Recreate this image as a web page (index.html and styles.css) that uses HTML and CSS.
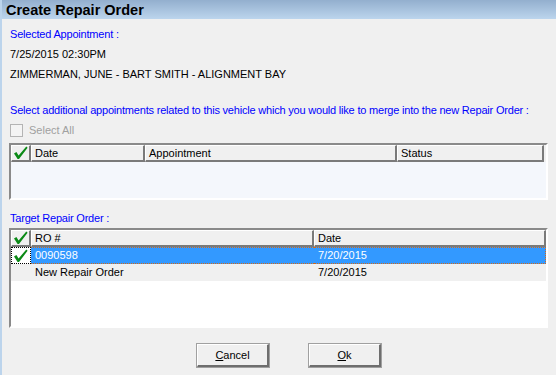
FILE: index.html
```html
<!DOCTYPE html>
<html>
<head>
<meta charset="utf-8">
<link rel="stylesheet" href="styles.css">
</head>
<body>
<div class="dialog">
  <div class="titlebar">Create Repair Order</div>
  <div class="content">
    <div class="line blue">Selected Appointment :</div>
    <div class="line">7/25/2015 02:30PM</div>
    <div class="line">ZIMMERMAN, JUNE - BART SMITH - ALIGNMENT BAY</div>
    <div class="line blue gap-top">Select additional appointments related to this vehicle which you would like to merge into the new Repair Order :</div>
    <div class="line selectall"><span class="checkbox"></span><span class="disabled">Select All</span></div>
    <div class="grid grid1">
      <div class="header">
        <div class="hcell chk"><svg width="16" height="14" viewBox="0 0 16 14"><path d="M1 7.5 L3.4 6 L5.6 9.4 L13.3 0.6 L14.6 1.8 L6 13 L4.6 13 Z" fill="#0b8a16"/></svg></div>
        <div class="hcell c-date">Date</div>
        <div class="hcell c-appt">Appointment</div>
        <div class="hcell c-status">Status</div>
      </div>
      <div class="body1"></div>
    </div>
    <div class="line blue target">Target Repair Order :</div>
    <div class="grid grid2">
      <div class="header">
        <div class="hcell chk"><svg width="16" height="14" viewBox="0 0 16 14"><path d="M1 7.5 L3.4 6 L5.6 9.4 L13.3 0.6 L14.6 1.8 L6 13 L4.6 13 Z" fill="#0b8a16"/></svg></div>
        <div class="hcell c-ro">RO #</div>
        <div class="hcell c-date2">Date</div>
      </div>
      <div class="row selected">
        <div class="cell chk focus"><svg width="16" height="14" viewBox="0 0 16 14"><path d="M1 7.5 L3.4 6 L5.6 9.4 L13.3 0.6 L14.6 1.8 L6 13 L4.6 13 Z" fill="#0b8a16"/></svg></div>
        <div class="cell sel c-ro">0090598</div>
        <div class="cell sel c-date2">7/20/2015</div>
      </div>
      <div class="row alt">
        <div class="cell chk"></div>
        <div class="cell c-ro">New Repair Order</div>
        <div class="cell c-date2">7/20/2015</div>
      </div>
    </div>
    <div class="buttons">
      <div class="btn"><u>C</u>ancel</div>
      <div class="btn"><u>O</u>k</div>
    </div>
  </div>
</div>
</body>
</html>
```
FILE: styles.css
```css
html, body {
  margin: 0;
  padding: 0;
  background: #f0f0f0;
}
.dialog {
  width: 556px;
  height: 375px;
  box-sizing: border-box;
  border-left: 2px solid #bcd4ec;
  background: #f0f0f0;
  font-family: "Liberation Sans", Arial, sans-serif;
  font-size: 11px;
  color: #000;
  overflow: hidden;
}
.titlebar {
  height: 19px;
  margin-left: -2px;
  padding-left: 6px;
  line-height: 20px;
  font-weight: bold;
  font-size: 14.5px;
  color: #000;
  background: linear-gradient(#93afce, #bcd5ed);
}
.content {
  padding: 5px 0 0 8px;
  display: flex;
  flex-direction: column;
}
.line {
  height: 20px;
  line-height: 20px;
  white-space: nowrap;
}
.blue { color: #0000ff; letter-spacing: -0.2px; }
.gap-top { margin-top: 16px; }
.selectall {
  display: flex;
  align-items: center;
  gap: 6px;
}
.checkbox {
  width: 11px;
  height: 11px;
  border: 1px solid #b4b4b4;
  background: #f4f4f4;
}
.disabled { color: #a0a0a0; }
.grid {
  width: 539px;
  box-sizing: border-box;
  border-top: 2px solid #8a8a8a;
  border-left: 2px solid #8a8a8a;
  border-right: 2px solid #ffffff;
  border-bottom: 2px solid #ffffff;
  margin-left: -1px;
  display: flex;
  flex-direction: column;
}
.grid1 {
  margin-top: 3px;
  height: 57px;
  background: #f4f7fc;
}
.body1 { flex: 1; background: #f4f7fc; }
.target { margin-top: 8px; }
.grid2 {
  height: 100px;
  background: #ffffff;
}
.header {
  display: flex;
  height: 17px;
  background: #f0f0f0;
}
.hcell {
  box-sizing: border-box;
  height: 17px;
  border-top: 1px solid #fff;
  border-left: 1px solid #fff;
  border-right: 2px solid #7a7a7a;
  border-bottom: 2px solid #7a7a7a;
  padding-left: 3px;
  line-height: 15px;
  background: #f0f0f0;
  white-space: nowrap;
}
.hcell.chk {
  width: 20px;
  padding: 0;
  display: flex;
  align-items: center;
  justify-content: center;
}
.c-date { width: 114px; }
.c-appt { width: 252px; }
.c-status { width: 147px; }
.c-ro { width: 283px; }
.c-date2 { width: 232px; }
.row {
  display: flex;
  height: 17px;
}
.cell {
  box-sizing: border-box;
  height: 17px;
  line-height: 17px;
  padding-left: 4px;
  white-space: nowrap;
}
.cell.chk {
  width: 20px;
  padding: 0;
  display: flex;
  align-items: center;
  justify-content: center;
}
.cell.focus {
  border: 1px dotted #000;
  background: #ffffff;
}
.row.selected .sel {
  background: #3399ff;
  color: #ffffff;
  border-top: 1px dotted #d26a1a;
  border-bottom: 1px dotted #d26a1a;
  line-height: 15px;
}
.row.selected .c-date2 {
  border-right: 1px dotted #d26a1a;
}
.row.alt .cell { background: #f0f0f0; }
.row.alt { width: 535px; }
.buttons {
  display: flex;
  justify-content: center;
  gap: 40px;
  margin-top: 16px;
  padding-left: 12px;
}
.btn {
  width: 72px;
  height: 23px;
  box-sizing: border-box;
  border-top: 1px solid #ffffff;
  border-left: 1px solid #ffffff;
  border-right: 2px solid #6e6e6e;
  border-bottom: 2px solid #6e6e6e;
  background: #f0f0f0;
  text-align: center;
  line-height: 20px;
  outline: 1px solid #a0a0a0;
}
```
